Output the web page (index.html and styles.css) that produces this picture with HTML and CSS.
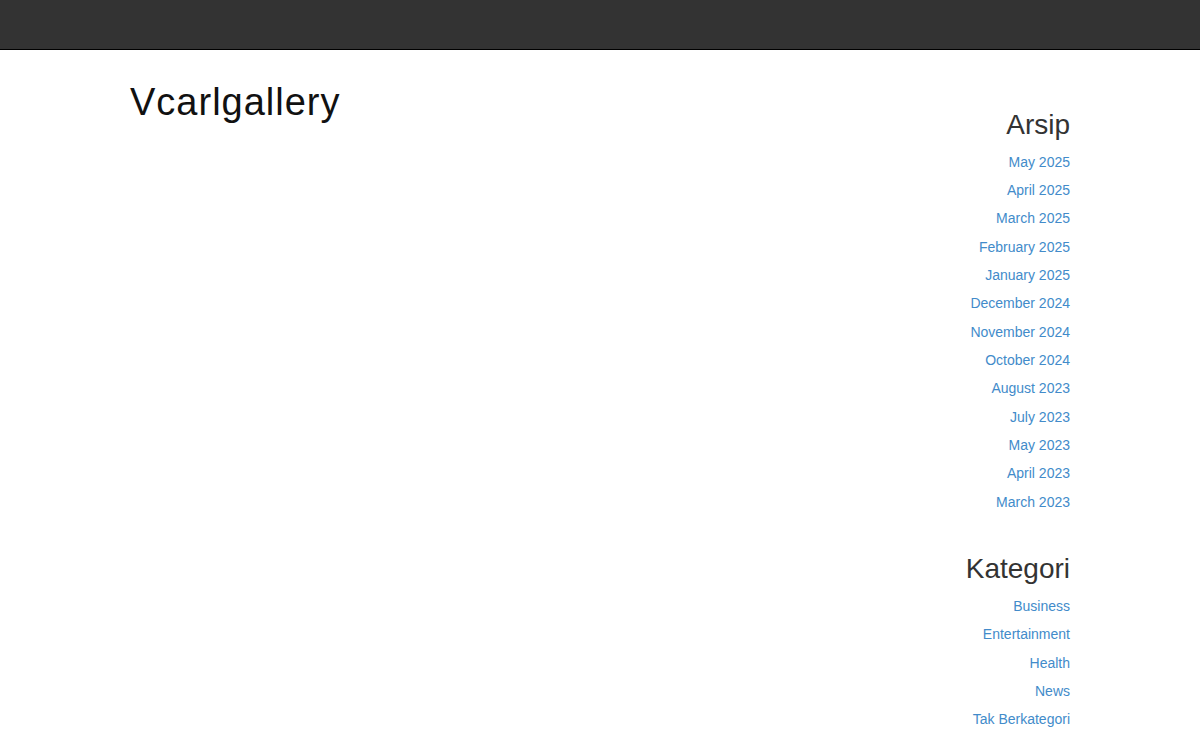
FILE: index.html
```html
<!DOCTYPE html>
<html lang="id">
<head>
<meta charset="utf-8">
<title>Vcarlgallery</title>
<link rel="stylesheet" href="styles.css">
</head>
<body>
<header class="topbar"></header>
<div class="container">
  <main class="main">
    <h1 class="site-title">Vcarlgallery</h1>
  </main>
  <aside class="sidebar">
    <section class="widget widget-archive">
      <h2 class="widget-title">Arsip</h2>
      <ul class="widget-list">
        <li><a href="#">May 2025</a></li>
        <li><a href="#">April 2025</a></li>
        <li><a href="#">March 2025</a></li>
        <li><a href="#">February 2025</a></li>
        <li><a href="#">January 2025</a></li>
        <li><a href="#">December 2024</a></li>
        <li><a href="#">November 2024</a></li>
        <li><a href="#">October 2024</a></li>
        <li><a href="#">August 2023</a></li>
        <li><a href="#">July 2023</a></li>
        <li><a href="#">May 2023</a></li>
        <li><a href="#">April 2023</a></li>
        <li><a href="#">March 2023</a></li>
      </ul>
    </section>
    <section class="widget widget-categories">
      <h2 class="widget-title">Kategori</h2>
      <ul class="widget-list">
        <li><a href="#">Business</a></li>
        <li><a href="#">Entertainment</a></li>
        <li><a href="#">Health</a></li>
        <li><a href="#">News</a></li>
        <li><a href="#">Tak Berkategori</a></li>
      </ul>
    </section>
  </aside>
</div>
</body>
</html>
```
FILE: styles.css
```css
html, body {
  margin: 0;
  padding: 0;
  background: #fff;
  font-family: "Liberation Sans", Arial, sans-serif;
  color: #333;
}

.topbar {
  height: 49px;
  background: #333;
  border-bottom: 1px solid #000;
}

.container {
  width: 940px;
  margin: 0 auto;
  display: flex;
  justify-content: space-between;
  align-items: flex-start;
}

.main {
  flex: 1;
}

.site-title {
  margin: 30px 0 0;
  font-size: 38px;
  line-height: 1.2;
  font-weight: normal;
  letter-spacing: 1px;
  color: #111;
}

.sidebar {
  margin-top: 60px;
  text-align: right;
}

.widget + .widget {
  margin-top: 38px;
}

.widget-title {
  margin: 0 0 7px;
  font-size: 28px;
  line-height: 1.1;
  font-weight: normal;
  color: #333;
}

.widget-list {
  list-style: none;
  margin: 0;
  padding: 0;
}

.widget-list li {
  font-size: 14px;
  line-height: 28.33px;
}

.widget-list a {
  color: #428bca;
  text-decoration: none;
}
```
